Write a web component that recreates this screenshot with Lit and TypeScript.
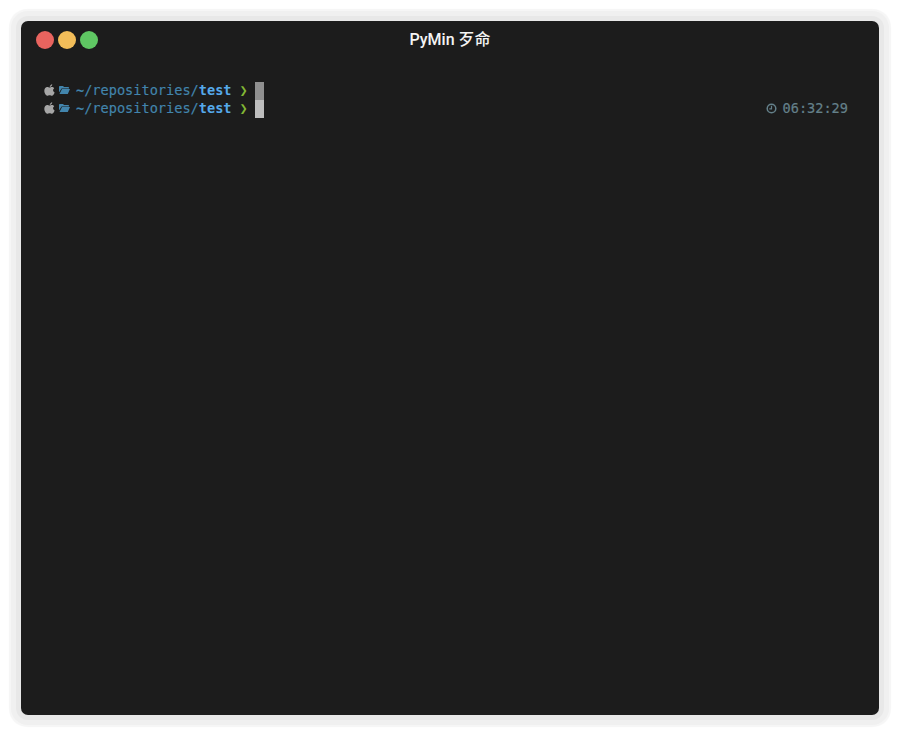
import { LitElement, html, css } from "lit";
import { customElement } from "lit/decorators.js";

@customElement("app-root")
export class AppRoot extends LitElement {
  static styles = css`
    :host { display: block; width: 900px; height: 736px; background: #fff; box-sizing: border-box; padding: 21px; overflow: hidden; }
    .win { height: 694px; background: #1c1c1c; border-radius: 7px; display: flex; flex-direction: column;
      box-shadow: 0 0 0 5px #e8e8e8, 0 0 0 10px #f0f0f0, 0 0 1px 12px #f6f6f6; }
    .bar { height: 38px; flex: none; display: flex; align-items: center; position: relative; padding-left: 15px; gap: 4px; }
    .dot { width: 18px; height: 18px; border-radius: 50%; }
    .r { background: #e9645f; } .y { background: #f2bd59; } .g { background: #5fc763; }
    .title { position: absolute; left: 0; right: 0; top: 9px; text-align: center; color: #f4f4f4; font: 500 16px/20px "Roboto", "Noto Sans CJK SC", sans-serif; }
    .term { padding: 22px 31px 0 23px; font: 13.6px/18px "DejaVu Sans Mono", monospace; }
    .line { height: 18px; display: flex; align-items: center; white-space: pre; }
    .ic { flex: none; display: block; }
    .apple { margin-right: 4px; width: 11px; height: 12px; }
    .folder { margin-right: 6px; width: 11px; height: 8px; }
    .path { color: #4285ad; font-weight: 700; -webkit-text-stroke: 0.15px #4285ad; } .path span { font-weight: 400; }
    .path .tilde { font-weight: 700; }
    .path b { color: #55a9ea; -webkit-text-stroke: 0; }
    .chev { color: #82b734; margin-left: 8px; font-weight: 700; width: 8.2px; }
    .cur { width: 9px; height: 18px; margin-left: 7px; margin-top: 2px; flex: none; }
    .c1 { background: #8f8f8f; } .c2 { background: #bdbdbd; }
    .time { margin-left: auto; display: flex; align-items: center; color: #64808a; gap: 6px; -webkit-text-stroke: 0.2px #64808a; }
    .clock { width: 11px; height: 11px; }
  `;
  private prompt(cls: string, time = false) {
    return html`<div class="line">
      <svg class="ic apple" viewBox="0 0 11 12"><path fill="#a6a6a6" d="M5.600 2.800C6 1.400 6.900.5 8.200.2c.1 1.400-.9 2.600-2.600 2.600zM5.500 3.500c.8 0 1.400-.5 2.400-.5.9 0 1.800.5 2.300 1.300-1.700 1-1.400 3.400.4 4.100-.6 1.500-1.500 3.300-2.700 3.300-.9 0-1.200-.5-2.300-.5s-1.400.5-2.300.5C1.900 11.700.3 9.100.3 6.800.3 4.400 1.800 3 3.300 3c1 0 1.500.5 2.200.5z"/></svg>
      <svg class="ic folder" viewBox="0 0 11 8"><path fill="#4285ad" d="M0 1c0-.6.4-1 1-1h3l1 1h4c.6 0 1 .4 1 1v.6H2.600L0 6.500zM3 3H11L8.800 8H.5z"/></svg>
      <span class="path"><span class="tilde">~</span><span>/repositories/</span><b>test</b></span><span class="chev">❯</span><span class="cur ${cls}"></span>
      ${time ? html`<span class="time"><svg class="ic clock" viewBox="0 0 11 11"><circle cx="5.500" cy="5.500" r="4.300" fill="none" stroke="#64808a" stroke-width="1.500"/><path d="M5.500 2.800v3h-2.200" fill="none" stroke="#64808a" stroke-width="1.200"/></svg><span>06:32:29</span></span>` : ""}
    </div>`;
  }
  render() {
    return html`<div class="win">
      <div class="bar"><div class="dot r"></div><div class="dot y"></div><div class="dot g"></div><div class="title">PyMin 歹命</div></div>
      <div class="term">${this.prompt("c1")}${this.prompt("c2", true)}</div>
    </div>`;
  }
}
